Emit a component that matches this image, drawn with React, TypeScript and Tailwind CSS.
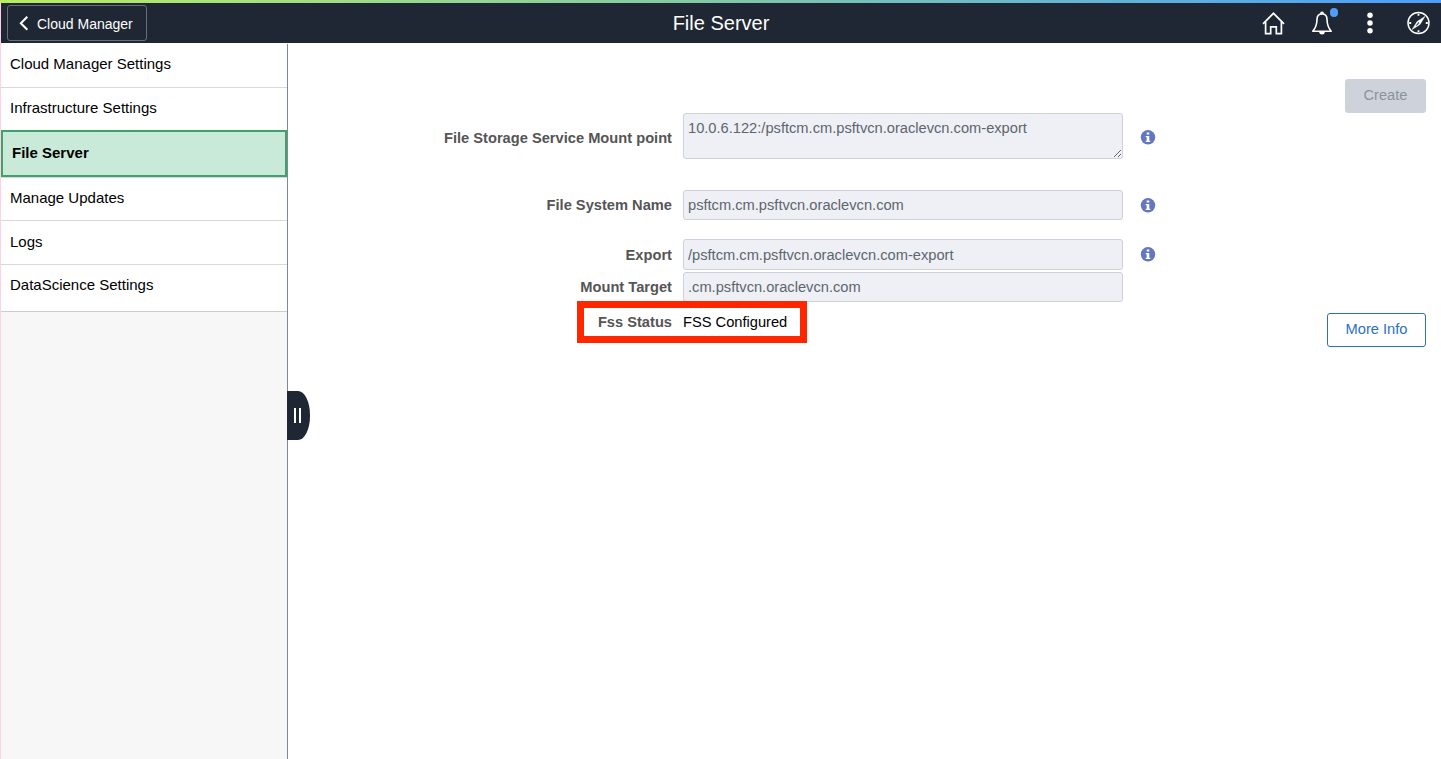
import type { ReactNode } from "react";

const navItems = [
  { label: "Cloud Manager Settings", className: "h-11 border-b border-[#d9d9d9] px-[9px] pb-[3px]" },
  { label: "Infrastructure Settings", className: "h-[42px] px-[9px] pb-[2px]" },
  { label: "File Server", className: "h-[47px] border-2 border-[#3fa26b] bg-[#c9ead8] px-[9px] pb-[2px] font-bold" },
  { label: "Manage Updates", className: "h-11 border-y border-[#d9d9d9] px-[9px] pb-[3px]" },
  { label: "Logs", className: "h-11 border-b border-[#d9d9d9] px-[9px] pb-px" },
  { label: "DataScience Settings", className: "h-[47px] border-b border-[#cccccc] px-[9px] pb-[6px]" },
];

function HomeIcon() {
  return (
    <svg width="24" height="24" viewBox="0 0 24 24" fill="none" stroke="#fff" strokeWidth="1.7">
      <path d="M2 12.800 12.500 2.300 23 12.800" />
      <path d="M4.600 10.800v11.800h5.100v-6.800h5.600v6.800h5.100V10.800" />
    </svg>
  );
}

function BellIcon() {
  return (
    <svg width="24" height="26" viewBox="0 0 24 26" fill="none" stroke="#fff" strokeWidth="1.6">
      <path d="M12 4c-3.200 0-4.900 2.100-5 5.200-.1 5-.6 8-4.200 12h18.400c-3.600-4-4.100-7-4.200-12C16.900 6.100 15.200 4 12 4Z" strokeLinejoin="round" />
      <path d="M9.100 21.600a2.900 2.900 0 0 0 5.800 0Z" fill="#fff" stroke="none" />
      <path d="M10 3.700a2 2.200 0 0 1 4 0Z" fill="#fff" stroke="none" />
    </svg>
  );
}

function MoreIcon() {
  return (
    <svg width="8" height="24" viewBox="0 0 8 24" fill="#fff">
      <circle cx="4" cy="4.300" r="2.750" />
      <circle cx="4" cy="12" r="2.750" />
      <circle cx="4" cy="19.700" r="2.750" />
    </svg>
  );
}

function CompassIcon() {
  return (
    <svg width="24" height="24" viewBox="0 0 24 24" fill="none" stroke="#fff">
      <circle cx="12.500" cy="12" r="10.500" strokeWidth="1.500" />
      <path d="M12.500 2.800v2M12.500 19.200v2M3.200 12h2M19.800 12h2" strokeWidth="1.800" />
      <path d="M18.900 5.400 14 13.400 11.100 10.600Z" fill="#fff" strokeWidth=".5" />
      <path d="M11.100 10.600 6.100 18.600 14 13.400" fill="#fff" strokeWidth=".5" />
      <path d="M11.400 12.200 9.500 15.200 12.400 13.200Z" fill="#1e2733" stroke="none" />
      <circle cx="12.500" cy="12" r=".7" fill="#1e2733" stroke="none" />
    </svg>
  );
}

function InfoIcon() {
  return (
    <svg className="ml-[17px] shrink-0" width="16" height="15" viewBox="0 0 16 15">
      <circle cx="8" cy="7.300" r="7.200" fill="#6476c0" />
      <path d="M6.700 2.400h2.600v2.200H6.700ZM5.700 6h3.600v4.800h1V12H5.700v-1.200h1V7.200h-1Z" fill="#fff" />
    </svg>
  );
}

function Row({ label, className, children }: { label: string; className: string; children: ReactNode }) {
  return (
    <div className={`flex items-center ${className}`}>
      <div className="mr-[11px] w-[384px] whitespace-nowrap text-right font-bold text-[#555555]">{label}</div>
      {children}
    </div>
  );
}

const fieldClass = "w-[440px] rounded-[3px] border border-[#cdd1da] bg-[#eff0f5] px-1 text-[#5c666f]";

export default function App() {
  return (
    <div className="flex h-[759px] w-[1441px] flex-col overflow-hidden bg-white font-['Liberation_Sans',Arial,sans-serif] text-[15px] leading-[18px] text-black">
      <div className="h-[3px] shrink-0 bg-linear-to-r from-[#b9ed5b] via-[#80c8a6] to-[#4f9dfc]" />
      <div className="flex min-h-0 flex-1 border-l border-[#ffd1e5]">
        <div className="flex min-w-0 flex-1 flex-col">
          <header className="grid h-10 shrink-0 grid-cols-[1fr_auto_1fr] items-center bg-[#1e2733] text-white">
            <div className="pl-[6px]">
              <button className="flex h-9 w-[140px] items-center rounded-[3px] border border-[#67717c] pl-[11px] text-[14px]">
                <svg width="10" height="16" viewBox="0 0 10 16" fill="none" stroke="#fff" strokeWidth="2">
                  <path d="M8.300 1.800 1.800 8.300l6.500 6.500" />
                </svg>
                <span className="ml-2 whitespace-nowrap pt-px">Cloud Manager</span>
              </button>
            </div>
            <h1 className="text-[20px] leading-6">File Server</h1>
            <div className="flex items-center justify-end pr-[11px]">
              <HomeIcon />
              <div className="relative ml-[25px]">
                <BellIcon />
                <span className="absolute -top-[2px] left-[20px] h-[9px] w-2 rounded-full bg-[#4f9dfc]" />
              </div>
              <div className="ml-8"><MoreIcon /></div>
              <div className="ml-8"><CompassIcon /></div>
            </div>
          </header>
          <div className="flex min-h-0 flex-1 pt-px">
            <aside className="relative w-[287px] shrink-0 border-r border-[#7f8995] bg-[#f7f7f7]">
              <nav>
                {navItems.map((item) => (
                  <div key={item.label} className={`flex items-center ${item.className} ${item.label === "File Server" ? "" : "bg-white"}`}>
                    {item.label}
                  </div>
                ))}
              </nav>
              <button aria-label="Collapse navigation" className="absolute -right-[23px] top-[347px] flex h-[49px] w-[23px] items-center gap-[3px] rounded-[0_12px_12px_0/0_24px_24px_0] bg-[#1e2733] pl-[7px]">
                <span className="h-[15px] w-[2px] bg-white" />
                <span className="h-[15px] w-[2px] bg-white" />
              </button>
            </aside>
            <main className="min-w-0 flex-1 pr-[15px] pt-[35px] text-[14.66px]">
              <div className="flex justify-end">
                <button className="h-[34px] w-[81px] rounded-[3px] bg-[#ced2db] pb-[2px] text-[#8b939c]">Create</button>
              </div>
              <div className="flex h-[46px] items-center">
                <div className="mr-[11px] w-[384px] whitespace-nowrap pt-[3px] text-right font-bold text-[#555555]">File Storage Service Mount point</div>
                <textarea readOnly className={`${fieldClass} block h-[46px] resize-y py-[5px]`} value="10.0.6.122:/psftcm.cm.psftvcn.oraclevcn.com-export" />
                <div className="pt-[2px]"><InfoIcon /></div>
              </div>
              <Row label="File System Name" className="mt-[31px] h-[30px]">
                <input readOnly className={`${fieldClass} h-[30px]`} value="psftcm.cm.psftvcn.oraclevcn.com" />
                <InfoIcon />
              </Row>
              <Row label="Export" className="mt-[19px] h-[31px]">
                <input readOnly className={`${fieldClass} h-[31px]`} value="/psftcm.cm.psftvcn.oraclevcn.com-export" />
                <InfoIcon />
              </Row>
              <Row label="Mount Target" className="mt-[2px] h-[30px]">
                <input readOnly className={`${fieldClass} h-[30px]`} value=".cm.psftvcn.oraclevcn.com" />
              </Row>
              <div className="flex items-start justify-between">
                <div className="relative -mt-px ml-[289px] flex h-[42px] w-[230px] items-center border-[7px] border-[#ff2600] bg-white">
                  <div className="mr-[11px] w-[88px] text-right font-bold text-[#555555]">Fss Status</div>
                  <div className="whitespace-nowrap">FSS Configured</div>
                </div>
                <button className="mt-[11px] h-[34px] w-[99px] rounded-[3px] border border-[#2b6fc7] pb-[2px] text-[#2b6fc7]">More Info</button>
              </div>
            </main>
          </div>
        </div>
      </div>
    </div>
  );
}
